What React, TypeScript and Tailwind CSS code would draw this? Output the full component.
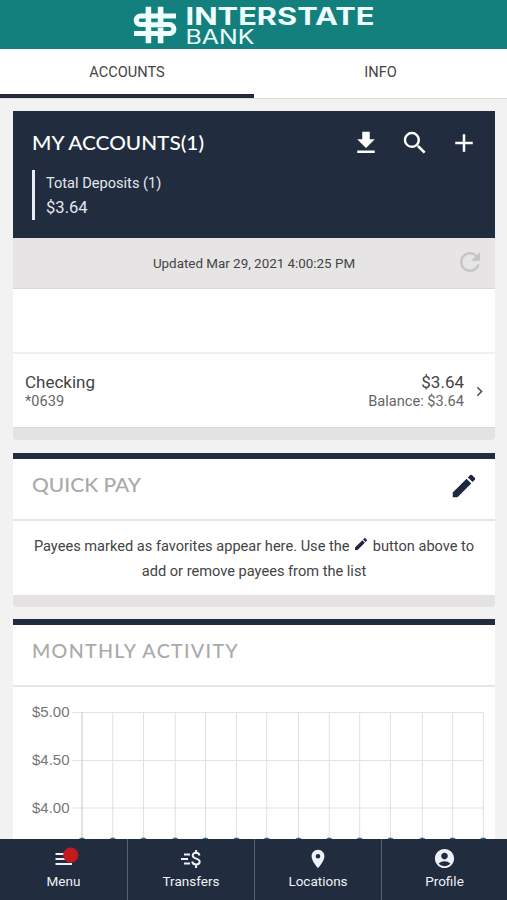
import type { ReactNode } from "react";
import { MdFileDownload, MdSearch, MdAdd, MdRefresh, MdEdit, MdChevronRight, MdLocationOn, MdAccountCircle } from "react-icons/md";

const months = [82, 112.7, 143.5, 175.3, 205.5, 236.5, 266.7, 298.5, 329.2, 359.7, 390.5, 422.3, 452.6, 483.3];
const ticks = [
  { label: "$5.00", y: 712.5 },
  { label: "$4.50", y: 760.5 },
  { label: "$4.00", y: 808 },
];

function Logo() {
  return (
    <svg width="507" height="49" viewBox="0 0 507 49" className="block text-[#effffd]" fill="none">
      <g stroke="currentColor" strokeWidth="5">
        <path d="M148.400 6.800V43.300M160.600 6.800V43.300" strokeWidth="5.600" />
        <path d="M176 16H140.500a4.300 4.300 0 0 0 0 8.600H169.500a4.300 4.300 0 0 1 0 8.900H134" />
      </g>
      <path d="M145.500 20.300V22M151.500 27.500H163M157.500 22.200H151.500M163.700 29V30.500" stroke="#6fb5b1" strokeWidth="0.800" />
      <text x="185.500" y="24.800" fill="currentColor" className="font-[Inter] text-[24.5px] font-bold" textLength="189" lengthAdjust="spacingAndGlyphs">INTERSTATE</text>
      <text x="185.500" y="43.500" fill="currentColor" className="font-[Inter] text-[19.5px]" textLength="69" lengthAdjust="spacingAndGlyphs">BANK</text>
    </svg>
  );
}

function CardTitle({ children, width, spaced }: { children: string; width: number; spaced?: boolean }) {
  return (
    <svg width="230" height="24" className="block shrink-0 overflow-visible">
      <text
        x="0"
        y="19"
        fill="currentColor"
        className={spaced ? "font-[Lato] text-[20px] font-medium tracking-[1.3px]" : "font-[Lato] text-[20px] font-medium"}
        textLength={width}
        lengthAdjust="spacingAndGlyphs"
      >
        {children}
      </text>
    </svg>
  );
}

function NavItem({ icon, label }: { icon: ReactNode; label: string }) {
  return (
    <div className="flex flex-col items-center border-r border-[#56606e] pt-2 last:border-r-0">
      <div className="flex h-[23px] items-center">{icon}</div>
      <span className="text-[13.5px] leading-[22px]">{label}</span>
    </div>
  );
}

export default function App() {
  return (
    <div className="flex h-[900px] w-[507px] flex-col overflow-hidden bg-[#f2f2f2] font-[Roboto,sans-serif] text-[#444]">
      <header className="h-[49px] shrink-0 bg-[#13807d]">
        <Logo />
      </header>

      <div className="flex h-[50px] shrink-0 border-b border-[#dcdcdc] bg-white text-center text-[14.6px] leading-[46px]">
        <div className="h-[49px] w-[254px] border-b-[4px] border-[#24293c]">ACCOUNTS</div>
        <div className="flex-1">INFO</div>
      </div>

      <main className="flex min-h-0 flex-1 flex-col overflow-hidden pt-[12px] pr-[12px] pl-[13px]">
        <section className="shrink-0">
          <div className="h-[127px] bg-[#212c3e] pt-5 pl-[19px] text-white">
            <div className="flex h-6 items-center justify-between pr-[16px]">
              <CardTitle width={172}>MY ACCOUNTS(1)</CardTitle>
              <div className="flex items-center gap-[19px]">
                <MdFileDownload size={30} />
                <MdSearch size={30} />
                <MdAdd size={30} />
              </div>
            </div>
            <div className="mt-[15px] h-[50px] border-l-[3px] border-[#e8edf3] pt-px pl-[11px] text-[#e2e7ee]">
              <div className="text-[14.6px] leading-[25px]">Total Deposits (1)</div>
              <div className="text-[16.6px] leading-[24px]">$3.64</div>
            </div>
          </div>
          <div className="relative flex h-[51px] items-center justify-center border-b border-[#dad8d8] bg-[#e6e4e4] pt-[3px] text-[13.4px]">
            Updated Mar 29, 2021 4:00:25 PM
            <MdRefresh size={30} className="absolute top-[9px] right-[10px] text-[#c6c5c5]" />
          </div>
          <div className="h-[65px] border-b-2 border-[#efefef] bg-white" />
          <div className="flex h-[73px] items-center bg-white pt-px pr-[6px] pl-[12px]">
            <div className="flex-1">
              <div className="text-[17px] leading-5">Checking</div>
              <div className="text-[14.6px] leading-[18px] text-[#666]">*0639</div>
            </div>
            <div className="text-right">
              <div className="text-[17px] leading-5">$3.64</div>
              <div className="text-[14.6px] leading-[18px] text-[#666]">Balance: $3.64</div>
            </div>
            <MdChevronRight size={19} className="ml-[6px] text-[#555]" />
          </div>
          <div className="h-[13px] rounded-b border-t border-[#dad8d8] bg-[#e4e2e2]" />
        </section>

        <section className="mt-[13px] shrink-0">
          <div className="flex h-[68px] items-start justify-between border-t-[6px] border-b-2 border-t-[#212c3e] border-b-[#e6e6e6] bg-white pt-[14px] pr-[16px] pl-[19px] text-[#aaa]">
            <CardTitle width={109}>QUICK PAY</CardTitle>
            <MdEdit size={30} className="-mt-[2px] text-[#1f2740]" />
          </div>
          <div className="h-[74px] bg-white pt-[13px] text-center text-[14.6px] leading-[24.5px]">
            Payees marked as favorites appear here. Use the <MdEdit size={16} className="inline -translate-y-[3px]" color="#1f2740" /> button above to
            <br />
            add or remove payees from the list
          </div>
          <div className="h-[12px] rounded-b bg-[#e4e2e2]" />
        </section>

        <section className="mt-[12px] shrink-0 bg-white">
          <div className="h-[68px] border-t-[6px] border-b-2 border-t-[#212c3e] border-b-[#e6e6e6] pt-[14px] pl-[19px] text-[#aaa]">
            <CardTitle width={207} spaced>MONTHLY ACTIVITY</CardTitle>
          </div>
          <svg width="482" height="152" viewBox="13 687 482 152" className="block">
            {ticks.map((t) => (
              <g key={t.label}>
                <path d={`M72 ${t.y}H483.500`} stroke="#e3e3e3" />
                <text x="32" y={t.y + 4.5} fill="#777" className="font-['Liberation_Sans'] text-[15px]" textLength="37.5" lengthAdjust="spacingAndGlyphs">{t.label}</text>
              </g>
            ))}
            {months.map((x, i) => (
              <g key={x}>
                <path d={`M${x} 712V839`} stroke={i === 0 ? "#c6c6c6" : "#e1e1e1"} />
                <circle cx={x} cy="841" r="3.500" fill="#35708f" />
              </g>
            ))}
          </svg>
        </section>
      </main>

      <nav className="grid h-[61px] shrink-0 grid-cols-[128px_127px_127px_125px] bg-[#212c3e] text-[#eef1f5]">
        <NavItem
          label="Menu"
          icon={
            <svg width="24" height="22" viewBox="0 0 24 22" className="overflow-visible">
              <path d="M3.500 6H16M3.500 11H18M3.500 16H20" stroke="currentColor" strokeWidth="2" />
              <circle cx="18.700" cy="7.200" r="7.600" fill="#c41a1c" />
            </svg>
          }
        />
        <NavItem
          label="Transfers"
          icon={
            <svg width="24" height="22" viewBox="0 0 24 22" fill="none" stroke="currentColor" strokeWidth="2">
              <path d="M5 6.500H11M2 11H9M5 15.500H11" />
              <path d="M20.500 7.500C20 5.400 18.500 4.800 17 4.800C15 4.800 13.700 6 13.700 7.500C13.700 11.500 20.700 9.700 20.700 13.800C20.700 15.500 19 16.500 17.200 16.500C15 16.500 13.500 15.400 13.200 13.500M17.100 2V5M17.100 16.500V20" />
            </svg>
          }
        />
        <NavItem label="Locations" icon={<MdLocationOn size={22} />} />
        <NavItem label="Profile" icon={<MdAccountCircle size={23} />} />
      </nav>
    </div>
  );
}
